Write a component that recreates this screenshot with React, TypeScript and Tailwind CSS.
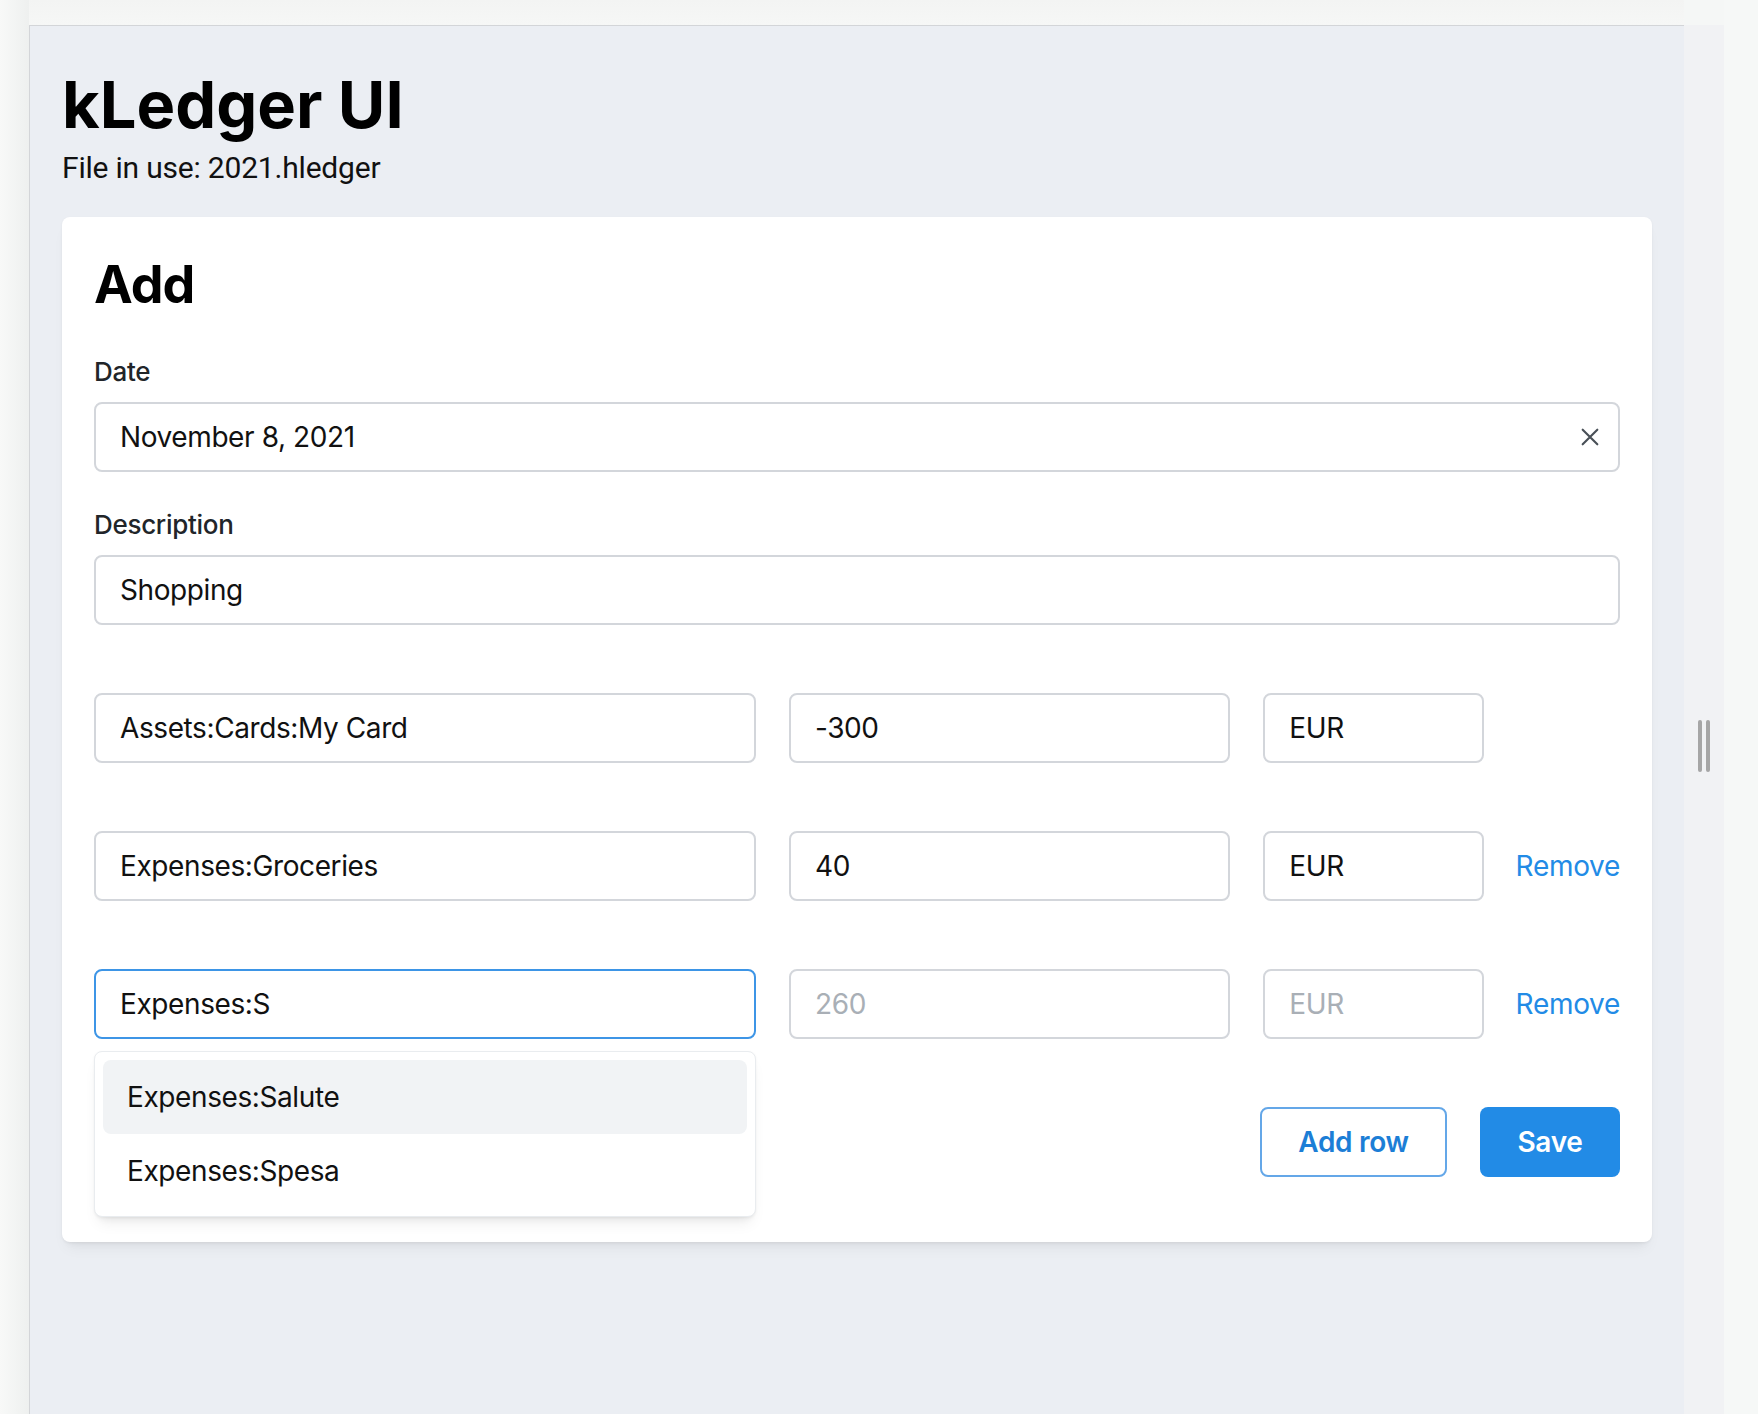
import React from "react";

const inputBase =
  "h-[70px] w-full rounded-[8px] border-2 border-[#d3d6db] bg-white pl-[24px] pr-[16px] text-[28px] tracking-[-0.4px] text-[#111111] outline-none placeholder:text-[#a9afb6]";

function XIcon() {
  return (
    <svg width="18" height="18" viewBox="0 0 16 16" fill="none">
      <path d="M1.5 1.5L14.5 14.5M14.5 1.5L1.5 14.5" stroke="#495057" strokeWidth="1.9" strokeLinecap="round" />
    </svg>
  );
}

function Row({
  account,
  amount,
  currency,
  removable,
  focused,
  placeholderAmount,
  placeholderCurrency,
  children,
}: {
  account: string;
  amount?: string;
  currency?: string;
  removable?: boolean;
  focused?: boolean;
  placeholderAmount?: string;
  placeholderCurrency?: string;
  children?: React.ReactNode;
}) {
  return (
    <div className="grid grid-cols-[3fr_2fr_1fr_103px] gap-x-[33px]">
      <div className="relative">
        <input
          readOnly
          value={account}
          className={
            focused
              ? "h-[70px] w-full rounded-[8px] border-2 border-[#3d95e6] bg-white pl-[24px] pr-[16px] text-[28px] tracking-[-0.4px] text-[#111111] outline-none"
              : inputBase
          }
        />
        {children}
      </div>
      <input readOnly value={amount ?? ""} placeholder={placeholderAmount} className={inputBase} />
      <input readOnly value={currency ?? ""} placeholder={placeholderCurrency} className={inputBase} />
      <div className="flex items-center justify-end">
        {removable && <span className="text-[28px] tracking-[-0.3px] text-[#228be6]">Remove</span>}
      </div>
    </div>
  );
}

export default function App() {
  return (
    <div
      className="flex h-[1414px] w-full overflow-hidden bg-[#f5f7f6]"
      style={{ fontFamily: "Inter, 'Noto Sans', sans-serif" }}
    >
      <div className="w-[29px] shrink-0 bg-gradient-to-r from-[#f8f9f8] to-[#eef0ef]" />
      <div className="flex w-[1655px] shrink-0 flex-col">
        <div className="h-[25px] bg-gradient-to-b from-[#f3f4f3] to-[#f6f7f6]" />
        <div className="flex-1 border-l border-t border-[#d3d5d8] bg-[#ebeef3] px-[32px] pt-[37px]">
          <h1 className="text-[65px] font-bold leading-[1.3] text-black">kLedger UI</h1>
          <p
            className="-mt-[1px] text-[30px] leading-[42px] tracking-[-0.2px] text-[#111111]"
            style={{ fontFamily: "Roboto, sans-serif" }}
          >
            File in use: 2021.hledger
          </p>

          <div className="mt-[28px] rounded-[8px] bg-white px-[32px] pb-[65px] pt-[34px] shadow-[0_1px_3px_rgba(0,0,0,0.05),0_10px_15px_-5px_rgba(0,0,0,0.06),0_7px_7px_-5px_rgba(0,0,0,0.04)]">
            <h2 className="text-[52px] font-bold leading-[1.3] tracking-[-1px] text-black">Add</h2>

            <div className="mt-[34px]">
              <div className="mb-[10px] text-[26px] font-medium leading-[40px] tracking-[-0.3px] text-[#212529]">Date</div>
              <div className="flex h-[70px] items-center justify-between rounded-[8px] border-2 border-[#d3d6db] pl-[24px] pr-[19px]">
                <span className="text-[28px] tracking-[-0.4px] text-[#111111]">November 8, 2021</span>
                <XIcon />
              </div>
            </div>

            <div className="mt-[33px]">
              <div className="mb-[10px] text-[26px] font-medium leading-[40px] tracking-[-0.3px] text-[#212529]">Description</div>
              <input readOnly value="Shopping" className={inputBase} />
            </div>

            <div className="mt-[68px] flex flex-col gap-[68px]">
              <Row account="Assets:Cards:My Card" amount="-300" currency="EUR" />
              <Row account="Expenses:Groceries" amount="40" currency="EUR" removable />
              <Row account="Expenses:S" placeholderAmount="260" placeholderCurrency="EUR" removable focused>
                <div className="absolute left-0 right-0 top-[82px] z-10 rounded-[8px] border border-[#e9ecef] bg-white p-[8px] shadow-[0_1px_3px_rgba(0,0,0,0.05),0_10px_15px_-5px_rgba(0,0,0,0.08),0_7px_7px_-5px_rgba(0,0,0,0.05)]">
                  <div className="flex h-[74px] items-center rounded-[8px] bg-[#f1f3f5] px-[24px] text-[28px] tracking-[-0.4px] text-[#111111]">
                    Expenses:Salute
                  </div>
                  <div className="flex h-[74px] items-center rounded-[8px] px-[24px] text-[28px] tracking-[-0.4px] text-[#111111]">
                    Expenses:Spesa
                  </div>
                </div>
              </Row>
            </div>

            <div className="mt-[68px] flex justify-end gap-[33px]">
              <button className="flex h-[70px] w-[187px] items-center justify-center rounded-[8px] border-2 border-[#64a7e8] bg-white text-[28px] font-semibold tracking-[-0.3px] text-[#1c7ed6]">
                Add row
              </button>
              <button className="flex h-[70px] w-[140px] items-center justify-center rounded-[8px] bg-[#228be6] text-[28px] font-semibold tracking-[-0.3px] text-white">
                Save
              </button>
            </div>
          </div>
        </div>
      </div>
      <div className="flex w-[40px] shrink-0 flex-col">
        <div className="h-[25px] bg-[#f5f7f6]" />
        <div className="flex-1 bg-[#f1f2f4] pl-[14px] pt-[695px]">
          <div className="flex gap-[4px]">
            <div className="h-[52px] w-[4px] rounded-full bg-[#a6a6a6]" />
            <div className="h-[52px] w-[4px] rounded-full bg-[#a6a6a6]" />
          </div>
        </div>
      </div>
      <div className="flex-1 bg-[#f6f8f7]" />
    </div>
  );
}
